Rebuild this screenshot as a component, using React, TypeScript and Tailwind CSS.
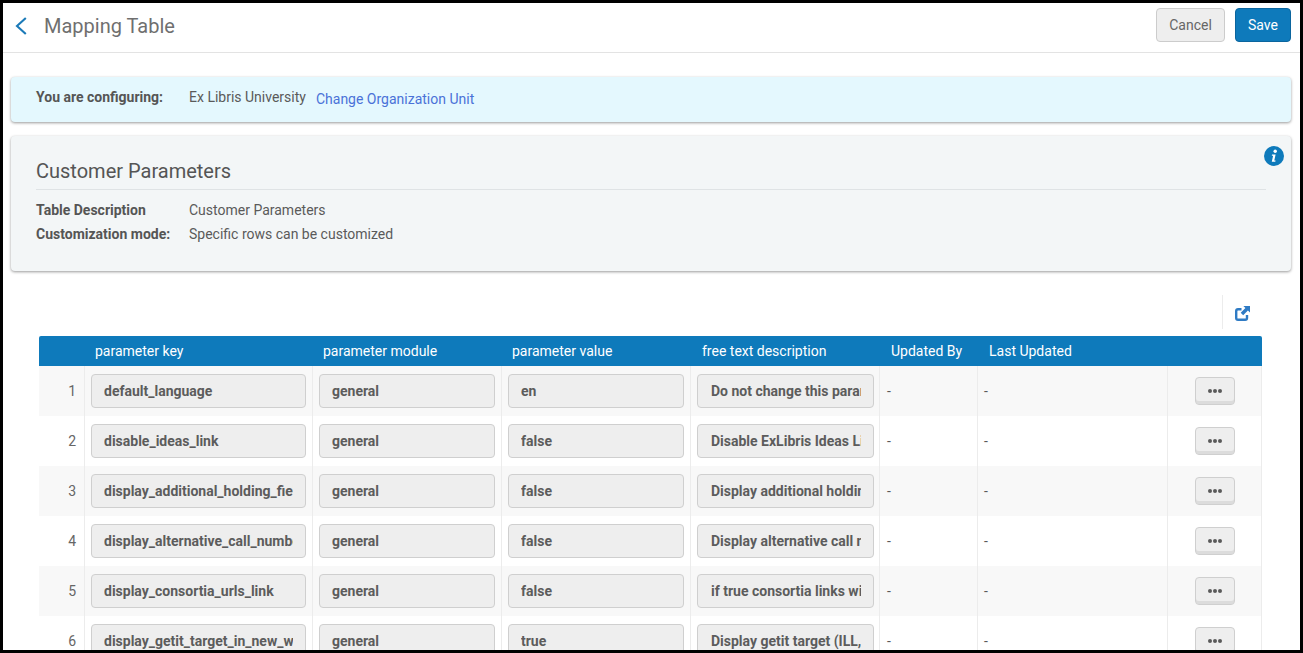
const rows = [
    ['default_language', 'general', 'en', 'Do not change this parameter'],
    ['disable_ideas_link', 'general', 'false', 'Disable ExLibris Ideas Link'],
    ['display_additional_holding_fields', 'general', 'false', 'Display additional holdings'],
    ['display_alternative_call_number', 'general', 'false', 'Display alternative call number'],
    ['display_consortia_urls_link', 'general', 'false', 'if true consortia links will'],
    ['display_getit_target_in_new_window', 'general', 'true', 'Display getit target (ILL, etc)'],
]

const columns = 'grid grid-cols-[46px_228px_189px_189px_189px_98px_190px_94px]'

function Field({ value, className }: { value: string; className: string }) {
    return (
        <div className={`h-[34px] flex items-center overflow-hidden rounded-[4px] border border-[#cfcfcf] bg-[#eeeeee] ${className}`}>
            <span className="block w-full overflow-hidden whitespace-nowrap text-[14px] font-bold text-[#5c5c5c]">{value}</span>
        </div>
    )
}

export default function App() {
    return (
        <div className="w-[1303px] h-[653px] overflow-hidden border-[3px] border-black bg-white text-[14px] text-[#5a5a5a] font-['Roboto',sans-serif]">
            {/* Header */}
            <div className="h-[50px] flex items-center pb-[5px] border-b border-[#e3e3e3]">
                <svg viewBox="0 0 12 18" className="ml-[12px] mt-[2px] w-[12px] h-[18px]">
                    <path d="M10.8 1L2 9l8.8 8" fill="none" stroke="#1b7ab8" strokeWidth="2.1" />
                </svg>
                <h1 className="ml-[17px] mt-[2px] text-[20px] text-[#6f6f6f]">Mapping Table</h1>
                <div className="ml-auto mr-[9px] flex gap-[10px]">
                    <button className="w-[69px] h-[34px] rounded-[4px] border border-[#cccccc] bg-[#eeeeee] text-[14px] text-[#666666]">Cancel</button>
                    <button className="w-[56px] h-[34px] rounded-[4px] border border-[#0b659e] bg-[#0e7abb] text-[14px] text-white">Save</button>
                </div>
            </div>

            <div className="pl-[8px] pr-[9px] pt-[24px]">
                {/* Configuring banner */}
                <div className="h-[45px] rounded-[4px] bg-[#e4f8fe] shadow-[0_1px_3px_rgba(0,0,0,0.4)] flex items-center pl-[25px] pb-[5px]">
                    <span className="w-[153px] font-bold text-[#555555]">You are configuring:</span>
                    <span className="text-[#5a5a5a]">Ex Libris University</span>
                    <a className="ml-[10px] mt-[4px] text-[#4a72d8]">Change Organization Unit</a>
                </div>

                {/* Customer parameters */}
                <div className="relative mt-[14px] h-[135px] rounded-[4px] bg-[#f3f6f7] shadow-[0_1px_3px_rgba(0,0,0,0.4)] px-[25px] pt-[22px]">
                    <svg viewBox="0 0 20 20" className="absolute right-[7px] top-[10px] w-[20px] h-[20px]">
                        <circle cx="10" cy="10" r="10" fill="#0e7abb" />
                        <circle cx="11.2" cy="5.2" r="1.7" fill="white" />
                        <path d="M8 8.4h3.6l-1.3 6h1.3l-.3 1.3H7.8l1.3-6H7.8z" fill="white" />
                    </svg>
                    <h2 className="h-[31px] text-[20px] leading-[26px] text-[#555555] border-b border-[#dfe3e5] box-content">Customer Parameters</h2>
                    <div className="mt-[8px] flex h-[24px] items-center">
                        <span className="w-[153px] font-bold text-[#555555]">Table Description</span>
                        <span>Customer Parameters</span>
                    </div>
                    <div className="flex h-[24px] items-center">
                        <span className="w-[153px] font-bold text-[#555555]">Customization mode:</span>
                        <span>Specific rows can be customized</span>
                    </div>
                </div>

                {/* Table toolbar */}
                <div className="mt-[24px] h-[34px] flex justify-end mr-[29px]">
                    <div className="w-[40px] border-l border-[#ececec] flex items-center justify-center">
                        <svg viewBox="0 0 15 15" className="w-[15px] h-[15px] mt-[2px]">
                            <path d="M6.5 3.2H3a1.8 1.8 0 0 0-1.8 1.8V12a1.8 1.8 0 0 0 1.8 1.8h7.2a1.8 1.8 0 0 0 1.8-1.8V9" fill="none" stroke="#2f7bc4" strokeWidth="2.4" />
                            <path d="M8.4 0H15V6.6L12.9 4.6L8.2 9.3L5.7 6.8L10.4 2.1Z" fill="#2f7bc4" />
                        </svg>
                    </div>
                </div>

                {/* Table */}
                <div className="ml-[28px] mr-[29px] mt-[7px]">
                    <div className={`${columns} h-[30px] items-center rounded-t-[2px] bg-[#0e7abb] text-[14px] text-white`}>
                        <div />
                        <div className="pl-[10px]">parameter key</div>
                        <div className="pl-[10px]">parameter module</div>
                        <div className="pl-[10px]">parameter value</div>
                        <div className="pl-[11px]">free text description</div>
                        <div className="pl-[11px]">Updated By</div>
                        <div className="pl-[11px]">Last Updated</div>
                        <div />
                    </div>
                    {rows.map((row, i) => (
                        <div key={row[0]} className={`${columns} h-[50px] border-r border-[#ececec] ${i % 2 === 0 ? 'bg-[#f8f8f8]' : 'bg-white'}`}>
                            <div className="border-r border-[#ececec] flex items-center justify-end pr-[8px] text-[#666666]">{i + 1}</div>
                            <div className="border-r border-[#ececec] pl-[6px] pr-[6px] pt-[8px]"><Field value={row[0]} className="w-[215px] px-[12px]" /></div>
                            <div className="border-r border-[#ececec] pl-[6px] pt-[8px]"><Field value={row[1]} className="w-[176px] px-[12px]" /></div>
                            <div className="border-r border-[#ececec] pl-[6px] pt-[8px]"><Field value={row[2]} className="w-[176px] px-[12px]" /></div>
                            <div className="border-r border-[#ececec] pl-[6px] pt-[8px]"><Field value={row[3]} className="w-[177px] pl-[13px] pr-[12px]" /></div>
                            <div className="border-r border-[#ececec] flex items-center pl-[7px]">-</div>
                            <div className="border-r border-[#ececec] flex items-center pl-[6px]">-</div>
                            <div className="flex pt-[11px] pl-[27px]">
                                <button className="w-[40px] h-[28px] flex items-center justify-center gap-[1.5px] rounded-[4px] border border-[#cfcfcf] bg-[#eeeeee] shadow-[inset_0_-3px_0_#dcdcdc]">
                                    <span className="w-[3.5px] h-[3.5px] rounded-full bg-[#5a5a5a]" />
                                    <span className="w-[3.5px] h-[3.5px] rounded-full bg-[#5a5a5a]" />
                                    <span className="w-[3.5px] h-[3.5px] rounded-full bg-[#5a5a5a]" />
                                </button>
                            </div>
                        </div>
                    ))}
                </div>
            </div>
        </div>
    )
}
